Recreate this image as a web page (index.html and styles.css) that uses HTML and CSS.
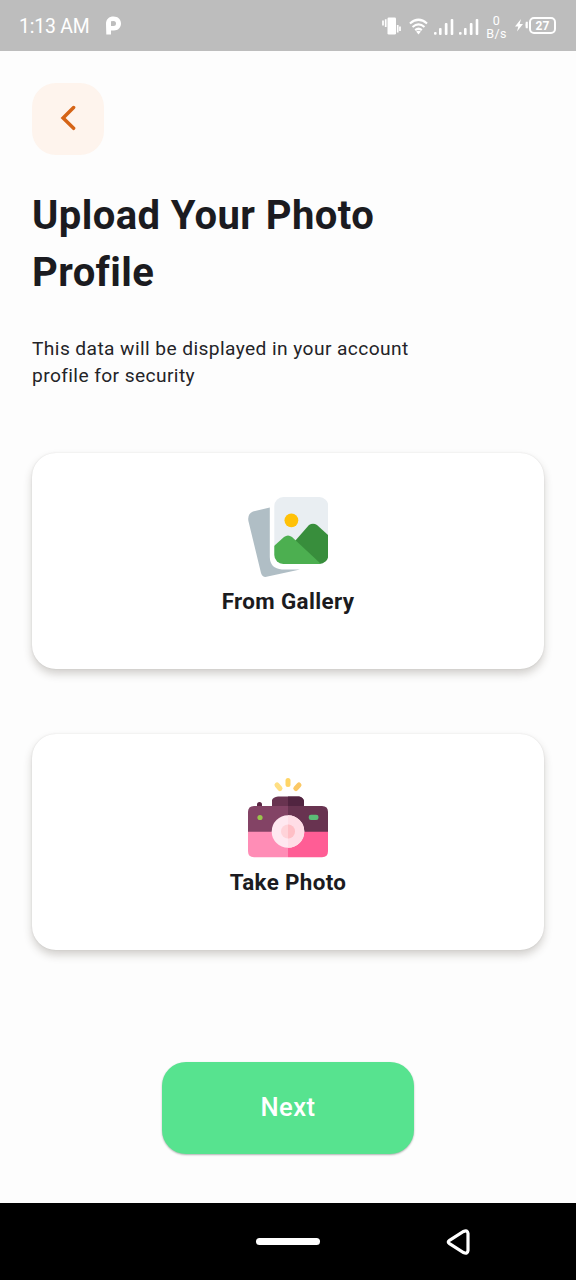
FILE: index.html
```html
<!DOCTYPE html>
<html lang="en">
<head>
<meta charset="utf-8">
<title>Upload Your Photo Profile</title>
<link rel="stylesheet" href="styles.css">
</head>
<body>
<div class="screen">
  <header class="status">
    <span class="time">1:13 AM</span>
    <svg class="app" width="16" height="20" viewBox="0 0 16 20"><path fill="#fff" fill-rule="evenodd" d="M0 8C0 3 3 .5 7.500.5 12 .5 15 3.300 15 7.500S12 14.500 8 14.500H5V18.500H.3ZM5 5.200V10H7.500Q10 10 10 7.500T7.500 5Z"/></svg>
    <div class="indicators">
      <svg class="vibrate" width="19" height="18" viewBox="0 0 19 18"><rect x="5.500" y=".5" width="8.500" height="17" rx="1.300" fill="#fff"/><path d="M1 3.500V8.500M3.700 2.300V10M15.700 8V15.500M18 9.500V14" stroke="#fff" stroke-width="1.700"/></svg>
      <svg class="wifi" width="19" height="17" viewBox="0 0 20 17" preserveAspectRatio="none" fill="none" stroke="#fff" stroke-width="2.200"><path d="M1 5.500Q10-2 19 5.500M3.700 9Q10 3.700 16.300 9M6.500 12.200Q10 9.300 13.500 12.200"/><path d="M7.500 13.500Q10 12 12.500 13.500L10 16.500Z" fill="#fff" stroke="none"/></svg>
      <svg class="signal" width="20" height="17" viewBox="0 0 20 17" fill="#fff"><rect y="14" width="2.600" height="2.800" rx="1"/><rect x="5" y="10" width="2.600" height="7" rx="1"/><rect x="10.800" y="5" width="2.700" height="12" rx="1"/><rect x="16.700" y="1" width="2.600" height="16" rx="1"/></svg>
      <svg class="signal" width="20" height="17" viewBox="0 0 20 17" fill="#fff"><rect y="14" width="2.600" height="2.800" rx="1"/><rect x="5" y="10" width="2.600" height="7" rx="1"/><rect x="10.800" y="5" width="2.700" height="12" rx="1"/><rect x="16.700" y="1" width="2.600" height="16" rx="1"/></svg>
      <span class="speed"><span>0</span><span>B/s</span></span>
      <svg class="bolt" width="13" height="15" viewBox="0 0 13 14"><path fill="#fff" d="M6 .5 0 8H3.300L2 13 8 5.500H4.700ZM10.800 3.200H12.800V9.800H10.800Q10 6.500 10.800 3.200Z"/></svg>
      <span class="battery">27</span>
    </div>
  </header>
  <main class="content">
    <button class="back" aria-label="Back"><svg width="16" height="26" viewBox="0 0 16 26"><path d="M13.600 2.600 3.100 13 13.600 23.300" fill="none" stroke="#d56417" stroke-width="3.500" stroke-linecap="round" stroke-linejoin="miter"/></svg></button>
    <h1 class="title">Upload Your Photo<br>Profile</h1>
    <p class="hint">This data will be displayed in your account<br>profile for security</p>
    <section class="card">
      <svg width="80" height="80" viewBox="0 0 80 80">
        <defs><clipPath id="photo"><rect x="26.300" y="0" width="54" height="67" rx="9"/></clipPath></defs>
        <path fill="#b0bec5" d="M21.800 10.500V60Q22 71.500 34 72.500H52L18.500 79.800Q14.500 80.500 13 76L.4 24Q-.8 17 5 14.500Z"/>
        <g clip-path="url(#photo)">
          <rect x="26" width="54" height="67" fill="#e9eef2"/>
          <path fill="#388e3c" d="M40 52 61 28Q65 25.500 69 28L81 39V68H50Z"/>
          <path fill="#4caf50" d="M26 49 36 40Q40 37 44 40L73 67H26Z"/>
          <circle cx="43.400" cy="23.300" r="6.900" fill="#ffc107"/>
        </g>
      </svg>
      <span class="label">From Gallery</span>
    </section>
    <section class="card">
      <svg width="80" height="80" viewBox="0 0 80 80">
        <path fill="#5b2643" d="M9 29V26.500Q9 24 11.500 24T14 26.500V29Z"/>
        <path fill="#683350" d="M24 29V22Q25 19 30 18.500H51Q55 19 56 23V29Z"/>
        <path fill="#512440" d="M40 18.500H51Q55 19 56 23V29H40Z"/>
        <path fill="#834365" d="M0 55V34Q0 28 6 28H40V55Z"/>
        <path fill="#683350" d="M40 28H74Q80 28 80 34V55H40Z"/>
        <path fill="#ff8db6" d="M0 53.700H40V79.200H6Q0 79.200 0 73Z"/>
        <path fill="#ff5d95" d="M40 53.700H80V73Q80 79.200 74 79.200H40Z"/>
        <circle cx="40" cy="53.500" r="16.300" fill="#ffe8f0"/>
        <path fill="#ffdde6" d="M40 37.200A16.300 16.300 0 0 1 40 69.800Z"/>
        <circle cx="40" cy="53.500" r="7" fill="#ffd3d9"/>
        <path fill="#ffbfc6" d="M40 46.500A7 7 0 0 1 40 60.500Z"/>
        <circle cx="12" cy="39.500" r="2.600" fill="#9ac44c"/>
        <rect x="60.700" y="36.800" width="9.800" height="5.200" rx="2.300" fill="#5bbb76"/>
        <g fill="none" stroke-width="5" stroke-linecap="round"><path stroke="#ffdf83" d="M29 7 32 10.500"/><path stroke="#ffd567" d="M40 2.500V6.500"/><path stroke="#fbc865" d="M51 7 47.800 10.500"/></g>
      </svg>
      <span class="label">Take Photo</span>
    </section>
    <button class="next">Next</button>
  </main>
  <nav class="navbar">
    <span class="home"></span>
    <svg class="navback" width="28" height="30" viewBox="0 0 28 30"><path d="M4.500 13.300 18.500 4.500Q22.500 2.500 23 6.500V23.500Q22.500 27.500 18.500 25.500L4.500 16.700Q2 15 4.500 13.300Z" fill="none" stroke="#fff" stroke-width="3.200"/></svg>
  </nav>
</div>
</body>
</html>
```
FILE: styles.css
```css
* { box-sizing: border-box; }
body { margin: 0; font-family: Roboto, "Liberation Sans", sans-serif; color: #1b1b20; background: #fdfdfd; }
svg { display: block; flex: none; }
button { border: 0; padding: 0; font: inherit; }
.screen { height: 1280px; display: flex; flex-direction: column; }
.status { height: 51px; flex: none; display: flex; align-items: center; padding: 0 20px 0 19px; background: #bdbdbd; color: #fff; }
.time { font-size: 19.4px; line-height: 24px; letter-spacing: -.2px; margin-top: 2px; }
.app { margin: 1px 0 0 17px; }
.indicators { margin-left: auto; display: flex; align-items: center; }
.wifi { margin-left: 8px; margin-top: 1px; }
.signal { margin-left: 6px; margin-top: 2px; }
.signal + .signal { margin-left: 5px; }
.speed { display: flex; flex-direction: column; align-items: center; width: 21px; margin-left: 7px; margin-top: 2px; font-size: 12.5px; line-height: 13px; letter-spacing: .3px; }
.bolt { margin-left: 8px; }
.battery { width: 27px; height: 17px; margin-left: 1px; border: 2px solid #fff; border-radius: 5px; font-size: 12px; line-height: 14px; font-weight: 700; text-align: center; }
.content { flex: 1; display: flex; flex-direction: column; padding: 32px; }
.back { width: 72px; height: 72px; border-radius: 24px; background: #fef4ed; display: flex; align-items: center; justify-content: center; padding-bottom: 3px; }
.title { margin: 32px 0 0; font-size: 40px; line-height: 57.2px; font-weight: 700; letter-spacing: .4px; }
.hint { margin: 34px 0 0; font-size: 19.2px; line-height: 27px; letter-spacing: .4px; color: #242428; }
.card { height: 216px; display: flex; flex-direction: column; align-items: center; padding-top: 44px; border-radius: 24px; background: #fff; box-shadow: 0 5px 8px rgba(60, 50, 35, .22), 0 0 2px rgba(0, 0, 0, .1); }
.hint + .card { margin-top: 64px; }
.card + .card { margin-top: 65px; }
.label { margin-top: 8px; font-size: 22.4px; line-height: 32px; font-weight: 700; letter-spacing: .35px; }
.next { width: 252px; height: 92px; margin: 112px auto 0; padding-bottom: 2px; border-radius: 24px; background: #57e38f; color: #fff; font-size: 25.6px; font-weight: 500; letter-spacing: .4px; box-shadow: 0 1px 2px rgba(0, 0, 0, .3); }
.navbar { height: 77px; flex: none; display: grid; grid-template-columns: 1fr 64px 1fr; align-items: center; background: #000; }
.home { grid-column: 2; height: 7px; border-radius: 4px; background: #fff; }
.navback { margin-left: 125px; }
```
